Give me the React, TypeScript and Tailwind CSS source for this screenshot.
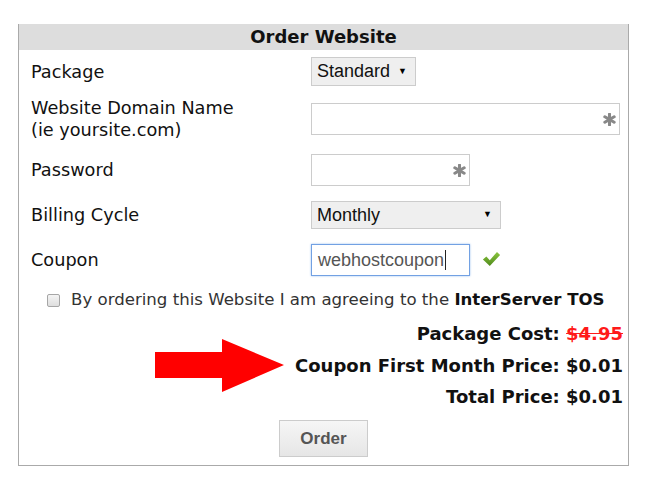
const label = "font-['DejaVu_Sans',sans-serif] text-[17.7px] text-[#111] leading-[22px]";
const ctrl = "font-['Liberation_Sans',Arial,sans-serif] text-[18px] text-[#111]";

function Star() {
  return (
    <svg width="13" height="13" viewBox="0 0 12 12" className="text-[#888888]">
      <g stroke="currentColor" strokeWidth="2.8" strokeLinecap="round">
        <line x1="6" y1="1" x2="6" y2="11" />
        <line x1="1.7" y1="3.5" x2="10.3" y2="8.5" />
        <line x1="1.7" y1="8.5" x2="10.3" y2="3.5" />
      </g>
    </svg>
  );
}

function Check() {
  return (
    <svg width="19" height="16" viewBox="0 0 16 14">
      <defs>
        <linearGradient id="ck" x1="0" y1="0" x2="0" y2="1">
          <stop offset="0" stopColor="#8cc63f" />
          <stop offset="1" stopColor="#4f8a1c" />
        </linearGradient>
      </defs>
      <path d="M0.5 7.5 L3.5 4.8 L6.5 8 L12.8 0.8 L15.5 3.5 L6.5 13.2 Z" fill="url(#ck)" />
    </svg>
  );
}

function Select({ value, width }: { value: string; width: string }) {
  return (
    <div className={`${width} flex items-center justify-between border border-[#cccccc] bg-[#efefef] pl-[5px] pr-[8px] ${ctrl}`}>
      <span>{value}</span>
      <span className="text-[9px] text-black">▼</span>
    </div>
  );
}

function Row({ children, name, className }: { children: React.ReactNode; name: React.ReactNode; className: string }) {
  return (
    <div className={`flex items-center ${className}`}>
      <div className={`w-[280px] ${label}`}>{name}</div>
      {children}
    </div>
  );
}

export default function App() {
  return (
    <div className="min-h-[488px] w-[647px] bg-white pt-[24px] pl-[18px]">
      <div className="w-[611px] border-x border-b border-[#aaaaaa]">
        <div className="h-[26px] bg-[#dddddd] text-center font-['DejaVu_Sans',sans-serif] text-[18px] font-bold leading-[26px] text-[#111]">
          Order Website
        </div>

        <div className="pl-[12px] pr-[5px]">
          <Row name="Package" className="mt-[7px] h-[29px]">
            <Select value="Standard" width="w-[105px] h-[29px]" />
          </Row>

          <Row name={<>Website Domain Name<br />(ie yoursite.com)</>} className="mt-[17px] h-[32px]">
            <div className="flex h-[32px] w-[309px] items-center justify-end border border-[#cccccc] bg-white pr-[3px]">
              <Star />
            </div>
          </Row>

          <Row name="Password" className="mt-[19px] h-[32px]">
            <div className="flex h-[32px] w-[159px] items-center justify-end border border-[#cccccc] bg-white pr-[3px]">
              <Star />
            </div>
          </Row>

          <Row name="Billing Cycle" className="mt-[15px] h-[28px]">
            <Select value="Monthly" width="w-[190px] h-[28px]" />
          </Row>

          <Row name="Coupon" className="mt-[15px] h-[32px]">
            <div className={`flex h-[32px] w-[159px] items-center border border-[#72a1e3] bg-white pl-[6px] shadow-[0_0_2px_#9dc0f0] ${ctrl} text-[#555]`}>
              webhostcoupon<span className="ml-[1px] h-[20px] w-[1px] bg-[#222]" />
            </div>
            <div className="ml-[12px] -mt-[3px]">
              <Check />
            </div>
          </Row>

          <div className="mt-[14px] flex h-[20px] items-center pl-[16px] font-['DejaVu_Sans',sans-serif] text-[16.6px] text-[#333]">
            <span className="mr-[11px] h-[13px] w-[13px] rounded-[2px] border border-[#a6a6a6] bg-gradient-to-b from-[#f4f4f4] to-[#dedede]" />
            <span>
              By ordering this Website I am agreeing to the <b className="text-[#111]">InterServer TOS</b>
            </span>
          </div>

          <div className="mt-[13px] flex flex-col items-end gap-[9px] font-['DejaVu_Sans',sans-serif] text-[18px] font-bold leading-[22px] text-[#111]">
            <div>
              Package Cost: <span className="text-[#ff1a1a] line-through">$4.95</span>
            </div>
            <div className="flex items-center">
              <svg width="129" height="53" viewBox="0 0 129 53" className="-my-[15px] mr-[11px]">
                <path d="M0 13 H67 V0 L129 26 L67 53 V39 H0 Z" fill="#ff0000" />
              </svg>
              <span>Coupon First Month Price: $0.01</span>
            </div>
            <div>Total Price: $0.01</div>
          </div>

          <div className="mt-[12px] mb-[8px] flex justify-center pr-[7px]">
            <button className="h-[37px] w-[89px] border border-[#cccccc] bg-gradient-to-b from-[#f6f6f6] to-[#e6e6e6] font-['Liberation_Sans',Arial,sans-serif] text-[17px] font-bold text-[#555]">
              Order
            </button>
          </div>
        </div>
      </div>
    </div>
  );
}
